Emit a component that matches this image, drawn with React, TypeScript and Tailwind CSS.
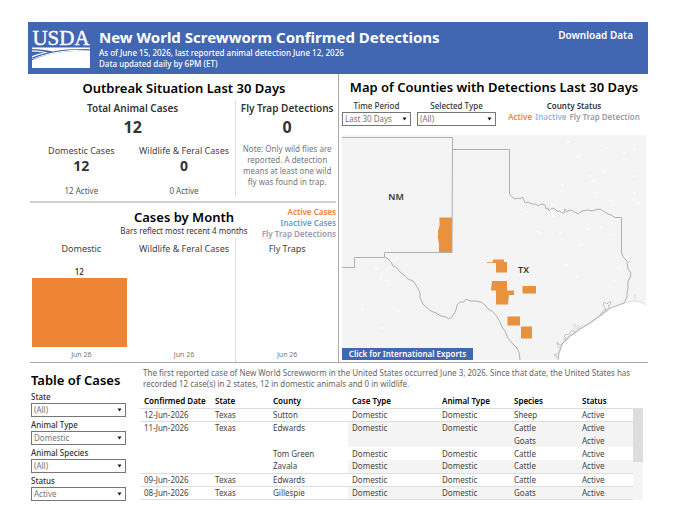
import clsx from "clsx";
import { useId } from "react";

interface FilterProps {
  label: string;
  value: string;
  options: string[];
  centered?: boolean;
}

interface CaseRow {
  date?: string;
  state?: string;
  county?: string;
  type?: string;
  species: string;
  shaded: boolean;
  line: boolean;
}

const CASES: CaseRow[] = [
  { date: "12-Jun-2026", state: "Texas", county: "Sutton", type: "Domestic", species: "Sheep", shaded: false, line: true },
  { date: "11-Jun-2026", state: "Texas", county: "Edwards", type: "Domestic", species: "Cattle", shaded: true, line: false },
  { species: "Goats", shaded: true, line: false },
  { county: "Tom Green", type: "Domestic", species: "Cattle", shaded: false, line: false },
  { county: "Zavala", type: "Domestic", species: "Cattle", shaded: true, line: true },
  { date: "09-Jun-2026", state: "Texas", county: "Edwards", type: "Domestic", species: "Cattle", shaded: false, line: true },
  { date: "08-Jun-2026", state: "Texas", county: "Gillespie", type: "Domestic", species: "Goats", shaded: true, line: true },
];

const LAKES = [
  [568, 142], [606, 148], [624, 153], [634, 150], [578, 157], [590, 176], [604, 171], [634, 176],
  [593, 181], [562, 185], [596, 193], [634, 193], [610, 201], [638, 203], [553, 216], [526, 212],
  [588, 229], [601, 227], [538, 232], [560, 233], [581, 245], [612, 234], [618, 268], [577, 277],
  [566, 265], [614, 281], [376, 269], [381, 278], [386, 281], [362, 310], [398, 311], [382, 328],
];

function UsdaLogo() {
  return (
    <svg viewBox="0 0 60 42" className="h-[42px] w-[60px] shrink-0 overflow-visible" role="img" aria-label="USDA">
      <text x="30" y="18" textAnchor="middle" fontFamily="Liberation Serif, serif" fontSize="21" fill="#fff" stroke="#fff" strokeWidth="0.4">
        USDA
      </text>
      <path d="M1 20.500H59V22.200C46 21.600 34 22.300 22 24.400C15 22.900 8 22 1 21.900Z" fill="#fff" />
      <path d="M1 23.300C7 23.500 12 24.300 17 25.500C11 26.900 6 28.500 1 30.600V29C5 27.400 9 26.200 13 25.500C9 24.900 5 24.500 1 24.500Z" fill="#fff" />
      <path d="M1 33.200C16 26.600 36 23 59 24V41H1Z" fill="#fff" />
      <path d="M1 31.800C14 26.600 30 23.400 46 22.800L59 23V23.500C38 23.200 18 26.300 1 32.300Z" fill="#fff" />
    </svg>
  );
}

function Filter({ label, value, options, centered }: FilterProps) {
  const id = useId();
  return (
    <div className="flex flex-col">
      <label htmlFor={id} className={clsx("text-[8px] leading-[13px] font-medium whitespace-nowrap text-[#333]", centered && "text-center")}>
        {label}
      </label>
      <div className="relative">
        <select
          id={id}
          defaultValue={value}
          className="block h-[14px] w-full appearance-none border border-[#777] bg-white pl-[2px] text-[8px] leading-[12px] text-[#777]"
        >
          {options.map((o) => (
            <option key={o}>{o}</option>
          ))}
        </select>
        <svg viewBox="0 0 6 5" className="pointer-events-none absolute top-[5px] right-[4px] h-[4px] w-[5px]">
          <path d="M0.500 0.500H5.500L3 4.500Z" fill="#111" />
        </svg>
      </div>
    </div>
  );
}

function CountyMap() {
  return (
    <svg viewBox="342 135 304 225" className="block w-full" role="img" aria-label="Map of counties with detections">
      <rect x="342" y="135" width="304" height="225" fill="#f4f4f4" />
      {LAKES.map(([x, y], i) => (
        <path
          key={i}
          d={i % 2 ? `M${x - 2} ${y + 1}l2 -2l2 0l-1 2z` : `M${x - 2} ${y - 1}l3 0l2 2l-3 0z`}
          fill="#fbfbfb"
        />
      ))}
      <path d="M646 304L641 302L635 301L624 303L616 306L610 308L601 315L590 323L580 329L570 336L562 344L559 353L558 360H646Z" fill="#fff" />

      <g fill="#e8913f">
        <path d="M439.500 217.500H452V252.500H439V244L438 238V231L439.500 226Z" />
        <path d="M493 259.500H504V262H507V272.500H496V263H487V262.200H493Z" />
        <path d="M492 281H507V290.500H514V295H509L508 304.500H496V290.500H491Z" />
        <path d="M522.500 286H536V293.500H522.500Z" />
        <path d="M507.500 316.500H520V325.500H507.500Z" />
        <path d="M521 326.500H532V338.500H521Z" />
      </g>

      <g fill="none" stroke="#b0b0b0" strokeWidth="1" strokeLinejoin="round">
        <path d="M342 137.500H452.500V149.500H509.500V194L512 197L515 199L518 198L520 199L522 197L524 200L525 203L528 202L532 204L536 204L538 206L541 204L545 205L546 209L548 208L549 211L552 208L555 209L557 211L560 211L562 213L564 213L565 209L567 212L570 210L573 211L578 214L582 211L588 210L592 211L595 210L600 209L603 211L608 214L611 215L615 217.500H621.500V253L623 257L627 261L628 269L631 273L630 278L628 281V289L627 292V297L624 303" />
        <path d="M452.500 149.500L452 252.500H384.500V257.500H354.500V267.500H342" />
        <path d="M384.500 257.500L388 259L391 262L393 266L396 267L400 272L405 276L408 279L413 281L416 285L418 289L420 292V298L423 304L426 307L431 311L436 313L441 316L446 317L449 319L452 317L454 314L456 310L457 305L460 302L464 302L466 299L470 301L475 301L481 302L485 305L488 309L492 311L496 315L500 322L502 327L505 331L508 338L512 343L516 347L519 352L520 360" />
      </g>
      <g fill="none" stroke="#b8b8b8" strokeWidth="0.8" strokeLinejoin="round">
        <path d="M624 303L616 306L610 308L601 315L590 323L580 329L570 336L562 344L559 353L558 360" strokeWidth="1.2" />
        <path d="M606 311L605 308L603 305L604 302L607 304L610 301L611 304L608 306L610 308M600 315L604 310L607 309" />
        <path d="M576 332L572 330L570 333L568 335L566 334L564 336L566 338L563 340M562 344L560 345L557 342L558 346L560 348M558 353L554 355L557 356L556 358" />
      </g>
      <path d="M646 305L641 302L635 301L624 303M635 301V294M572 326L575 324V327L578 325V328L582 325M573 328L580 329" fill="none" stroke="#d4d4d4" strokeWidth="0.8" />

      <g fontSize="9" fontWeight="600" fill="#333" textAnchor="middle">
        <text x="396" y="200">NM</text>
        <text x="523.500" y="273">TX</text>
      </g>
    </svg>
  );
}

function Stat({ label, value, active }: { label: string; value: string; active: string }) {
  return (
    <div className="flex flex-col items-center whitespace-nowrap">
      <h4 className="text-[9px] leading-[14px] text-[#444]">{label}</h4>
      <p className="text-[14px] leading-[16px] font-bold text-[#333]">{value}</p>
      <p className="mt-[11px] text-[8px] leading-[12px] text-[#555]">{active}</p>
    </div>
  );
}

function Outbreak() {
  return (
    <section className="pt-[4px]">
      <h2 className="text-center text-[13px] leading-[20px] font-semibold text-black">Outbreak Situation Last 30 Days</h2>
      <div className="grid grid-cols-3 pt-[3px]">
        <div className="col-span-2 text-center">
          <h3 className="text-[10px] leading-[15px] font-semibold text-[#333]">Total Animal Cases</h3>
          <p className="text-[16px] leading-[22px] font-bold text-[#333]">12</p>
          <div className="mt-[6px] grid grid-cols-2">
            <Stat label="Domestic Cases" value="12" active="12 Active" />
            <Stat label="Wildlife & Feral Cases" value="0" active="0 Active" />
          </div>
        </div>
        <div className="border-l border-[#ddd] text-center whitespace-nowrap">
          <h3 className="text-[10px] leading-[15px] font-semibold text-[#333]">Fly Trap Detections</h3>
          <p className="text-[16px] leading-[22px] font-bold text-[#333]">0</p>
          <p className="mt-[5px] text-[8px] leading-[11px] text-[#777]">
            Note: Only wild flies are
            <br />
            reported. A detection
            <br />
            means at least one wild
            <br />
            fly was found in trap.
          </p>
        </div>
      </div>
      <hr className="mt-[4px] mr-[2px] border-t-2 border-[#d0d0d0]" />
    </section>
  );
}

function CasesByMonth() {
  const months = [
    { label: "Domestic", count: 12 },
    { label: "Wildlife & Feral Cases", count: 0 },
    { label: "Fly Traps", count: 0 },
  ];
  return (
    <section className="relative pt-[5px]">
      <h2 className="text-center text-[13px] leading-[18px] font-semibold text-black">Cases by Month</h2>
      <p className="text-center text-[8px] leading-[10px] text-[#333]">Bars reflect most recent 4 months</p>
      <ul className="absolute top-[3px] right-[2px] text-right text-[8px] leading-[11px] font-semibold">
        <li className="text-[#ee8434]">Active Cases</li>
        <li className="text-[#6b9bd0]">Inactive Cases</li>
        <li className="text-[#9a9ab0]">Fly Trap Detections</li>
      </ul>
      <div className="mt-[2px] grid h-[124px] grid-cols-3">
        {months.map((m, i) => (
          <div key={m.label} className={clsx("flex flex-col text-center whitespace-nowrap", i === 2 && "border-l border-[#ddd]")}>
            <h4 className="mt-[4px] text-[9px] leading-[14px] text-[#444]">{m.label}</h4>
            <div className="flex grow flex-col justify-end pr-[6px] pl-[2px]">
              {m.count > 0 && (
                <>
                  <span className="text-[8px] leading-[12px] font-medium text-[#222]">{m.count}</span>
                  <div className="bg-[#ee8434]" style={{ height: (m.count / 12) * 69 }} />
                </>
              )}
            </div>
            <span className="pt-[2px] pb-[1px] text-[7px] leading-[12px] text-[#777]">Jun 26</span>
          </div>
        ))}
      </div>
    </section>
  );
}

function MapPanel() {
  return (
    <section className="pt-[3px] pr-[2px] pl-[3px]">
      <h2 className="text-center text-[13px] leading-[20px] font-semibold whitespace-nowrap text-black">
        Map of Counties with Detections Last 30 Days
      </h2>
      <div className="flex gap-[6px] pt-[2px]">
        <div className="w-[69px]">
          <Filter label="Time Period" value="Last 30 Days" options={["Last 30 Days", "All"]} centered />
        </div>
        <div className="w-[79px]">
          <Filter label="Selected Type" value="(All)" options={["(All)", "Domestic", "Wildlife"]} centered />
        </div>
        <div className="grow text-center whitespace-nowrap">
          <h3 className="text-[8px] leading-[13px] font-semibold text-[#333]">County Status</h3>
          <p className="flex justify-center gap-[3px] text-[8px] leading-[10px] font-semibold">
            <span className="text-[#ee8434]">Active</span>
            <span className="text-[#8fb8e6]">Inactive</span>
            <span className="text-[#9a9aa8]">Fly Trap Detection</span>
          </p>
        </div>
      </div>
      <div className="relative mt-[9px]">
        <CountyMap />
        <button className="absolute bottom-0 left-0 h-[12px] w-[131px] bg-[#4267b2] text-[8px] leading-[12px] font-semibold text-white">
          Click for International Exports
        </button>
      </div>
    </section>
  );
}

function CaseTable() {
  return (
    <table className="w-full table-fixed text-left text-[8px] text-[#444]">
      <colgroup>
        <col className="w-[71px]" />
        <col className="w-[58px]" />
        <col className="w-[79px]" />
        <col className="w-[90px]" />
        <col className="w-[72px]" />
        <col className="w-[68px]" />
        <col />
      </colgroup>
      <thead>
        <tr className="h-[13px] border-b border-[#ddd] leading-[12px] text-black">
          {["Confirmed Date", "State", "County", "Case Type", "Animal Type", "Species", "Status"].map((h) => (
            <th key={h} className="p-0 pl-[4px] font-semibold whitespace-nowrap">
              {h}
            </th>
          ))}
        </tr>
      </thead>
      <tbody>
        {CASES.map((c, i) => {
          const cell = clsx("p-0 pl-[4px]", c.shaded && "bg-[#f4f4f4]");
          return (
            <tr key={i} className={clsx("h-[13px] leading-[12px]", c.line && "border-b border-[#ddd]")}>
              <td className="p-0 pl-[4px]">{c.date}</td>
              <td className="p-0 pl-[4px]">{c.state}</td>
              <td className="p-0 pl-[4px]">{c.county}</td>
              <td className={cell}>{c.type}</td>
              <td className={cell}>{c.type}</td>
              <td className={cell}>{c.species}</td>
              <td className={cell}>Active</td>
            </tr>
          );
        })}
      </tbody>
    </table>
  );
}

export default function App() {
  return (
    <main className="min-h-screen bg-white pt-[22px] pr-8 pl-7 font-['Noto_Sans',sans-serif]">
      <header className="flex h-[52px] items-start bg-[#4267b2] pt-[5px] pl-[3px] text-white">
        <UsdaLogo />
        <div className="ml-[8px] grow whitespace-nowrap">
          <h1 className="text-[15px] leading-[20px] font-bold">New World Screwworm Confirmed Detections</h1>
          <p className="text-[8px] leading-[11px] font-medium">As of June 15, 2026, last reported animal detection June 12, 2026</p>
          <p className="text-[8px] leading-[11px] font-medium">Data updated daily by 6PM (ET)</p>
        </div>
        <a href="#download" className="mr-[15px] text-[10px] leading-[16px] font-semibold whitespace-nowrap">
          Download Data
        </a>
      </header>

      <div className="ml-[2px] grid grid-cols-2 border-b border-[#aaa]">
        <div className="border-r border-[#aaa]">
          <Outbreak />
          <CasesByMonth />
        </div>
        <MapPanel />
      </div>

      <section className="flex pl-[3px]">
        <div className="w-[95px] shrink-0 pt-[7px]">
          <h2 className="text-[13px] leading-[20px] font-semibold whitespace-nowrap text-black">Table of Cases</h2>
          <div className="flex flex-col gap-[1px]">
            <Filter label="State" value="(All)" options={["(All)", "New Mexico", "Texas"]} />
            <Filter label="Animal Type" value="Domestic" options={["(All)", "Domestic"]} />
            <Filter label="Animal Species" value="(All)" options={["(All)", "Cattle", "Goats", "Sheep"]} />
            <Filter label="Status" value="Active" options={["Active", "Inactive"]} />
          </div>
        </div>
        <div className="ml-[14px] min-w-0 grow pt-[4px]">
          <p className="pl-[3px] text-[8px] leading-[11px] text-[#666]">
            The first reported case of New World Screwworm in the United States occurred June 3, 2026. Since that date, the United States has
            recorded 12 case(s) in 2 states, 12 in domestic animals and 0 in wildlife.
          </p>
          <div className="mt-[6px] flex pr-[5px]">
            <div className="grow">
              <CaseTable />
            </div>
            <div className="mt-[13px] w-[10px] shrink-0 bg-[#f4f4f4]">
              <div className="h-[54px] bg-[#ddd]" />
            </div>
          </div>
        </div>
      </section>
    </main>
  );
}
